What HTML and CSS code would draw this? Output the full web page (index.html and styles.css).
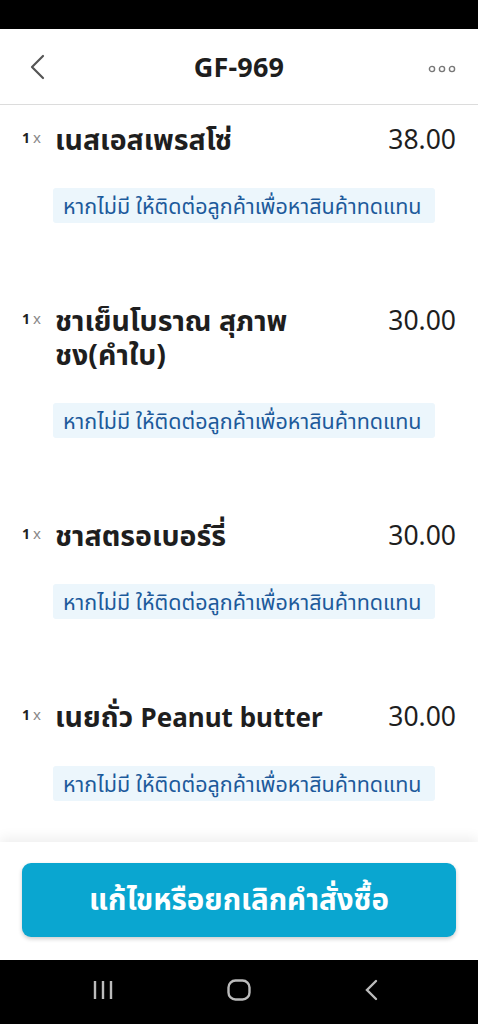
FILE: index.html
```html
<!DOCTYPE html>
<html lang="th">
<head>
<meta charset="utf-8">
<link rel="stylesheet" href="styles.css">
</head>
<body>
<div class="screen">
  <div class="statusbar"></div>
  <header class="header">
    <button class="icon-btn back" aria-label="back">
      <svg width="18" height="26" viewBox="0 0 18 26"><path d="M15 2 L4 13 L15 24" fill="none" stroke="#555" stroke-width="2.2" stroke-linecap="round" stroke-linejoin="round"/></svg>
    </button>
    <h1 class="title">GF-969</h1>
    <button class="icon-btn more" aria-label="more">
      <svg width="28" height="8" viewBox="0 0 28 8"><circle cx="4" cy="4" r="2.6" fill="none" stroke="#777" stroke-width="1.4"/><circle cx="14" cy="4" r="2.6" fill="none" stroke="#777" stroke-width="1.4"/><circle cx="24" cy="4" r="2.6" fill="none" stroke="#777" stroke-width="1.4"/></svg>
    </button>
  </header>
  <main class="list">
    <div class="item">
      <div class="row">
        <div class="qty"><b>1</b><span>x</span></div>
        <div class="name">เนสเอสเพรสโซ่</div>
        <div class="price">38.00</div>
      </div>
      <div class="note">หากไม่มี ให้ติดต่อลูกค้าเพื่อหาสินค้าทดแทน</div>
    </div>
    <div class="item">
      <div class="row">
        <div class="qty"><b>1</b><span>x</span></div>
        <div class="name">ชาเย็นโบราณ สุภาพ<br>ชง(คำใบ)</div>
        <div class="price">30.00</div>
      </div>
      <div class="note">หากไม่มี ให้ติดต่อลูกค้าเพื่อหาสินค้าทดแทน</div>
    </div>
    <div class="item">
      <div class="row">
        <div class="qty"><b>1</b><span>x</span></div>
        <div class="name">ชาสตรอเบอร์รี่</div>
        <div class="price">30.00</div>
      </div>
      <div class="note">หากไม่มี ให้ติดต่อลูกค้าเพื่อหาสินค้าทดแทน</div>
    </div>
    <div class="item">
      <div class="row">
        <div class="qty"><b>1</b><span>x</span></div>
        <div class="name">เนยถั่ว <span class="latin">Peanut butter</span></div>
        <div class="price">30.00</div>
      </div>
      <div class="note">หากไม่มี ให้ติดต่อลูกค้าเพื่อหาสินค้าทดแทน</div>
    </div>
  </main>
  <footer class="footer">
    <button class="primary">แก้ไขหรือยกเลิกคำสั่งซื้อ</button>
  </footer>
  <nav class="navbar">
    <svg width="22" height="20" viewBox="0 0 22 20"><path d="M3 1v18M11 1v18M19 1v18" stroke="#bbb" stroke-width="2.4"/></svg>
    <svg width="24" height="22" viewBox="0 0 24 22"><rect x="1.5" y="1.5" width="21" height="19" rx="7" fill="none" stroke="#bbb" stroke-width="2.4"/></svg>
    <svg width="14" height="22" viewBox="0 0 14 22"><path d="M12 2 L3 11 L12 20" fill="none" stroke="#bbb" stroke-width="2.4" stroke-linecap="round"/></svg>
  </nav>
</div>
</body>
</html>
```

FILE: styles.css
```css
* { box-sizing: border-box; }
html, body { margin: 0; padding: 0; }
body {
  font-family: "Noto Sans", "Noto Sans Thai", "Open Sans", sans-serif;
  color: #1e1e1e;
  background: #fff;
}
.screen {
  width: 478px;
  height: 1024px;
  display: flex;
  flex-direction: column;
  overflow: hidden;
}
.statusbar { height: 29px; background: #000; flex: none; }
.header {
  flex: none;
  height: 76px;
  display: flex;
  align-items: center;
  justify-content: space-between;
  padding: 0 22px 0 28px;
  border-bottom: 1.5px solid #dcdcdc;
}
.icon-btn {
  background: none;
  border: 0;
  padding: 0;
  display: flex;
  align-items: center;
  width: 32px;
}
.more { justify-content: flex-end; padding-top: 4px; }
.title {
  margin: 0;
  font-size: 27px;
  font-weight: 700;
  color: #1e1e1e;
  letter-spacing: 0.2px;
  margin-right: 6px;
}
.list {
  flex: 1;
  overflow: hidden;
  padding: 17px 22px 0 22px;
  display: flex;
  flex-direction: column;
  gap: 80px;
}
.row {
  display: flex;
  align-items: flex-start;
}
.qty {
  width: 33px;
  flex: none;
  font-size: 14px;
  line-height: 14px;
  padding-top: 8px;
  color: #222;
}
.qty b { font-weight: 700; margin-right: 3px; }
.qty span { color: #888; font-size: 15px; }
.name {
  flex: 1;
  font-size: 28.5px;
  font-weight: 700;
  line-height: 34px;
}
.name .latin { font-size: 26px; }
.price {
  flex: none;
  font-size: 26.5px;
  line-height: 34px;
  color: #1e1e1e;
}
.note {
  margin: 32px 0 0 31px;
  width: 382px;
  height: 35px;
  background: #ecf6fc;
  color: #1d5a9b;
  font-size: 21.5px;
  line-height: 35px;
  padding-left: 10px;
  border-radius: 3px;
  white-space: nowrap;
}
.footer {
  flex: none;
  height: 118px;
  background: #fff;
  padding: 21px 22px 0 22px;
  box-shadow: 0 -4px 12px rgba(0,0,0,0.07);
  position: relative;
}
.primary {
  width: 100%;
  height: 74px;
  border: 0;
  border-radius: 9px;
  background: #0aa6d0;
  color: #fff;
  font-family: inherit;
  font-size: 29.5px;
  font-weight: 700;
  box-shadow: 0 2px 4px rgba(0,0,0,0.2);
}
.navbar {
  flex: none;
  height: 64px;
  background: #000;
  display: flex;
  align-items: center;
  justify-content: space-between;
  padding: 0 100px 4px 92px;
}
```
